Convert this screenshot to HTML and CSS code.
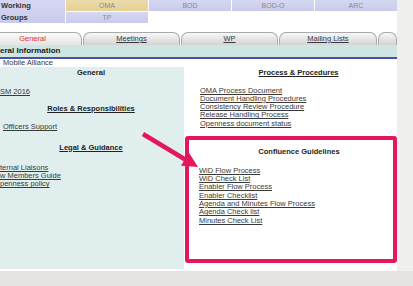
FILE: index.html
```html
<!DOCTYPE html>
<html>
<head>
<meta charset="utf-8">
<link rel="stylesheet" href="styles.css">
</head>
<body>
<div class="page">
  <div class="nav">
    <div class="wg">Working<br>Groups</div>
    <div class="cell gold">OMA</div>
    <div class="cell">BOD</div>
    <div class="cell">BOD-O</div>
    <div class="cell">ARC</div>
    <div class="cell tp">TP</div>
  </div>
  <div class="tabs">
    <div class="tab first active">General</div>
    <div class="tab"><a>Meetings</a></div>
    <div class="tab"><a>WP</a></div>
    <div class="tab wide"><a>Mailing Lists</a></div>
    <div class="tab rest"></div>
  </div>
  <div class="titlebar">eral Information</div>
  <div class="org">Mobile Alliance</div>
  <div class="main">
    <div class="left">
      <div class="lh">General</div>
      <ul class="llinks m1"><li><a>SM 2016</a></li></ul>
      <div class="lh u m2">Roles &amp; Responsibilities</div>
      <ul class="llinks m3"><li class="ind"><a>Officers Support</a></li></ul>
      <div class="lh u m4">Legal &amp; Guidance</div>
      <ul class="llinks m5">
        <li><a>ternal Liaisons</a></li>
        <li><a>w Members Guide</a></li>
        <li><a>penness policy</a></li>
      </ul>
    </div>
    <div class="right">
      <div class="rh u">Process &amp; Procedures</div>
      <ul class="rlinks">
        <li><a>OMA Process Document</a></li>
        <li><a>Document Handling Procedures </a></li>
        <li><a>Consistency Review Procedure</a></li>
        <li><a>Release Handling Process</a></li>
        <li><a>Openness document status</a></li>
      </ul>
      <div class="box">
        <div class="bh">Confluence Guidelines</div>
        <ul class="blinks">
          <li><a>WiD Flow Process</a></li>
          <li><a>WiD Check List </a></li>
          <li><a>Enabler Flow Process</a></li>
          <li><a>Enabler Checklist</a></li>
          <li><a>Agenda and Minutes Flow Process</a></li>
          <li><a>Agenda Check list </a></li>
          <li><a>Minutes Check List</a></li>
        </ul>
      </div>
    </div>
  </div>
</div>
<svg class="arrow" width="413" height="286" viewBox="0 0 413 286">
  <line x1="143" y1="134" x2="186" y2="160" stroke="#e5175c" stroke-width="4.5"/>
  <polygon points="198,167 181,165.8 189,152.8" fill="#e5175c"/>
</svg>
</body>
</html>
```
FILE: styles.css
```css
body {
  margin: 0;
  background: linear-gradient(to bottom, #efefee 271px, #e5e4e2 271px);
  min-height: 286px;
  overflow: hidden;
  font-family: "Liberation Sans", Arial, sans-serif;
  font-size: 7.5px;
  color: #3a3a3a;
  position: relative;
}
ul { list-style: none; margin: 0; padding: 0; }
a { text-decoration: underline; color: #3a3a3a; }

.page {
  width: 397px;
  background: #fff;
  height: 271px;
}

.nav {
  display: grid;
  grid-template-columns: 65px 82px 82px 82px 82px;
  grid-template-rows: 11px 11px;
  gap: 1px;
}
.wg {
  grid-row: span 2;
  background: linear-gradient(#d6d7f1, #c9cbec);
  font-weight: bold;
  padding-left: 1px;
  line-height: 11.5px;
  color: #333;
}
.cell {
  background: linear-gradient(#d6d7f1, #c9cbec);
  text-align: center;
  color: #8a8a8a;
  line-height: 11px;
  font-size: 7px;
}
.cell.gold { background: linear-gradient(#ecdcab, #e4d196); }
.cell.tp { grid-column: 2; grid-row: 2; }

.tabs {
  display: flex;
  gap: 1px;
  margin-top: 9px;
  height: 13px;
  overflow: hidden;
}
.tab {
  box-sizing: border-box;
  width: 97px;
  flex: none;
  background: linear-gradient(#f7f7f7, #d4d4d4);
  border: 1px solid #a9a9a9;
  border-bottom: none;
  border-radius: 7px 7px 0 0;
  text-align: center;
  line-height: 12px;
}
.tab.first { width: 82px; padding-right: 16px; border-left: none; border-radius: 0 7px 0 0; }
.tab.wide { width: 98px; }
.tab.rest { flex: 1; }
.tab.active { color: #e0322f; background: linear-gradient(#fbfbfb, #e4e4e4); }

.titlebar {
  height: 12px;
  background: #cde5e3;
  border-bottom: 2px solid #4b4fa6;
  font-weight: bold;
  font-size: 8px;
  line-height: 12px;
  padding-left: 0;
  color: #222;
}
.org {
  height: 8px;
  line-height: 8px;
  padding-left: 3px;
}

.main {
  display: flex;
  align-items: flex-start;
}
.left {
  width: 184px;
  height: 202px;
  box-sizing: border-box;
  background: #e0eeee;
  padding-top: 2.25px;
}
.lh {
  text-align: center;
  padding-right: 2px;
  font-weight: bold;
  line-height: 8.5px;
  color: #222;
}
.u { text-decoration: underline; }
.llinks { line-height: 8.3px; }
.llinks .ind { padding-left: 3px; }
.m1 { margin-top: 10.1px; }
.m2 { margin-top: 8.6px; }
.m3 { margin-top: 9.9px; }
.m4 { margin-top: 12.3px; }
.m5 { margin-top: 11.3px; }

.right {
  flex: 1;
  height: 204px;
  background: #fff;
  padding-top: 1.5px;
  box-sizing: border-box;
}
.rh {
  text-align: center;
  padding-left: 16px;
  font-weight: bold;
  line-height: 8.5px;
  color: #222;
}
.rlinks {
  margin-top: 9.5px;
  padding-left: 16px;
  line-height: 8.3px;
}
.box {
  margin-top: 8px;
  margin-left: 1px;
  border: 4px solid #e5175c;
  border-radius: 3px;
  padding: 7.75px 0 34px 0;
  background: #fff;
}
.bh {
  text-align: center;
  padding-left: 16px;
  font-weight: bold;
  line-height: 8.5px;
  color: #222;
}
.blinks {
  margin-top: 10.5px;
  padding-left: 10px;
  line-height: 8.3px;
}

.arrow {
  position: absolute;
  left: 0;
  top: 0;
  pointer-events: none;
}
```
